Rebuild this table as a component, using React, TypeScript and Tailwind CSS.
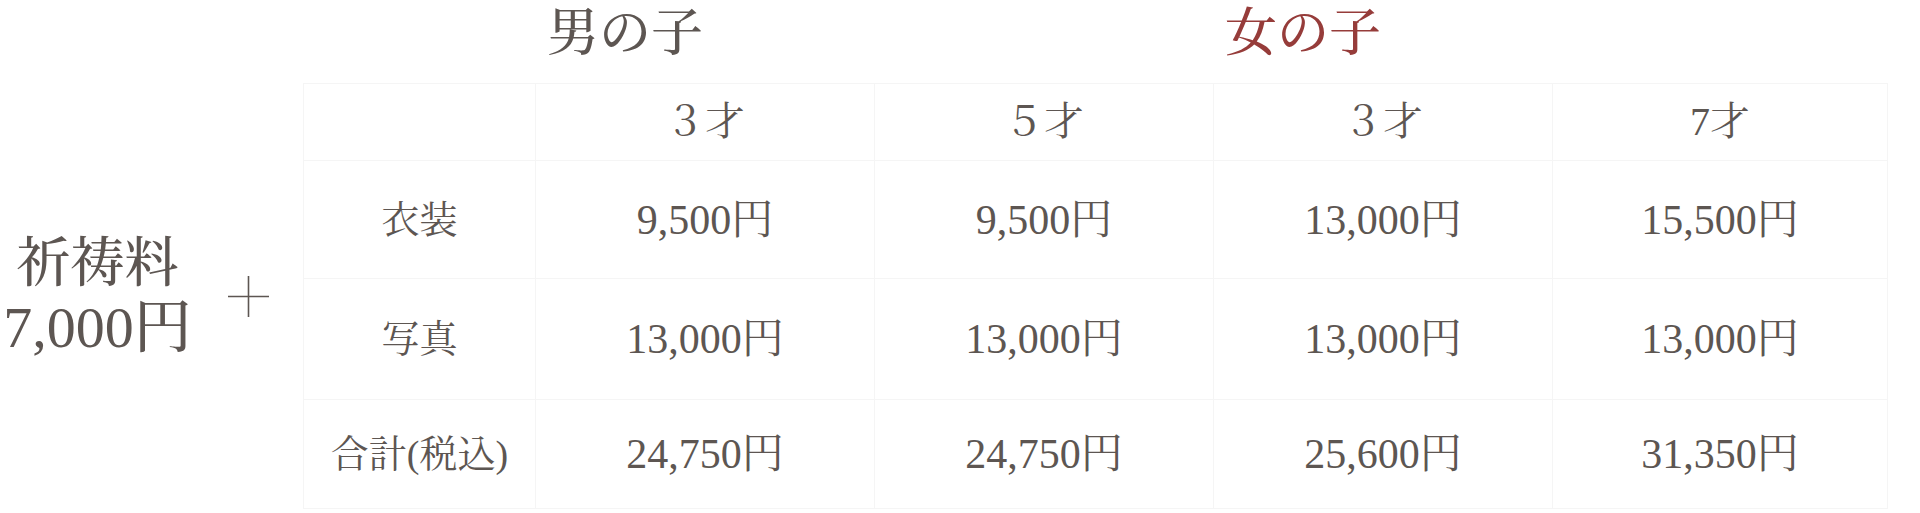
import React from 'react';

const ages = ['３才', '５才', '３才', '7才'];

const rows = [
  { label: '衣装', h: 'h-[118px] pt-[8px]', values: ['9,500円', '9,500円', '13,000円', '15,500円'] },
  { label: '写真', h: 'h-[121px] pt-[4px]', values: ['13,000円', '13,000円', '13,000円', '13,000円'] },
  { label: '合計(税込)', h: 'h-[109px]', values: ['24,750円', '24,750円', '25,600円', '31,350円'] },
];

const colWidths = ['w-[339px]', 'w-[339px]', 'w-[339px]', 'w-[335px]'];

export default function App() {
  return (
    <div className="w-[1920px] h-[513px] overflow-hidden bg-white text-[#5d5652] font-['Liberation_Serif','Noto_Serif_CJK_JP','Noto_Sans_CJK_JP',serif]">
      {/* heading row */}
      <div className="flex h-[68px] items-center pl-[286px] mb-[15px]">
        <h2 className="w-[678px] text-center text-[52px] font-medium leading-none">男の子</h2>
        <h2 className="w-[678px] text-center text-[52px] font-medium leading-none text-[#963c3a]">女の子</h2>
      </div>

      <div className="flex items-center">
        <div className="w-[195px] text-center font-medium leading-[63px]">
          <p className="text-[54px]">祈祷料</p>
          <p className="text-[58px]">7,000円</p>
        </div>

        <svg className="ml-[33px] mr-[34px] w-[41px] h-[41px]" viewBox="0 0 41 41" fill="none" stroke="currentColor" strokeWidth="1.6">
          <line x1="20.5" y1="0" x2="20.5" y2="41" />
          <line x1="0" y1="20.5" x2="41" y2="20.5" />
        </svg>

        <table className="border-collapse text-[42px] leading-none">
          <thead>
            <tr className="h-[77px]">
              <th className="w-[232px] border border-[#f5f5f5]"></th>
              {ages.map((a, i) => (
                <th key={i} className={`${colWidths[i]} border border-[#f5f5f5] text-center text-[40px] font-normal`}>
                  {a}
                </th>
              ))}
            </tr>
          </thead>
          <tbody>
            {rows.map((r) => (
              <tr key={r.label} className={r.h}>
                <td className="border border-[#f5f5f5] text-center text-[38px]">{r.label}</td>
                {r.values.map((v, i) => (
                  <td key={i} className="border border-[#f5f5f5] text-center">
                    {v}
                  </td>
                ))}
              </tr>
            ))}
          </tbody>
        </table>
      </div>
    </div>
  );
}
